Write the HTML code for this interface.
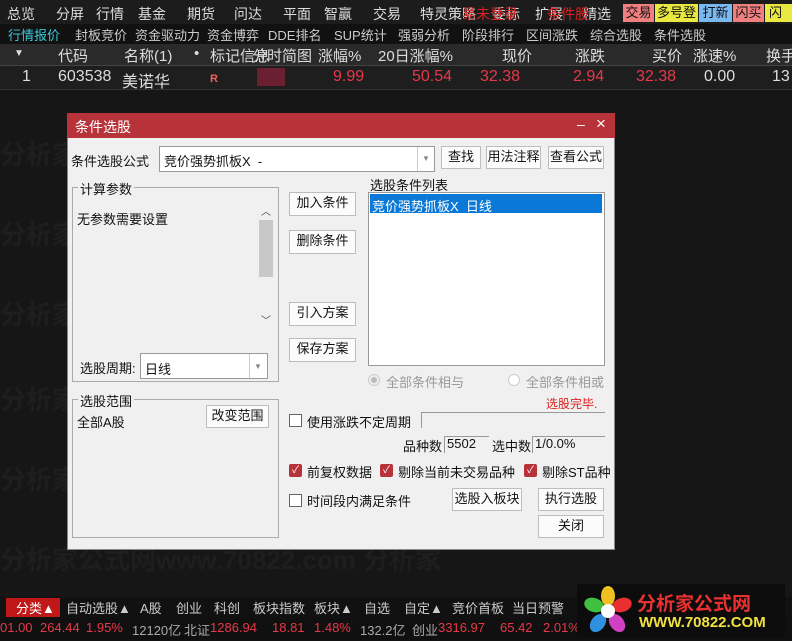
<!DOCTYPE html>
<html><head><meta charset="utf-8">
<style>
*{margin:0;padding:0;box-sizing:border-box}
body{width:792px;height:641px;background:#161616;position:relative;overflow:hidden;font-family:"Liberation Sans","Noto Sans CJK SC",sans-serif;font-size:13px;color:#ccc}
.a{position:absolute;white-space:nowrap}
.wm{color:#1e1e1e;font-size:26px;font-weight:bold}
.btn{position:absolute;background:#fbfbfb;border:1px solid #bdbdbd;color:#111;font-size:13px;text-align:center;line-height:20px}
.cb{position:absolute;width:13px;height:13px;border:1px solid #666;background:#fff}
.cbr{position:absolute;width:13px;height:13px;background:#b8323a;border-radius:2px;color:#fff;font-size:10px;line-height:13px;text-align:center}
.t{position:absolute;color:#111;font-size:13px;white-space:nowrap}
</style></head><body>
<div class="a" style="left:0;top:0;width:792px;height:24px;background:#1c1c1c"></div>
<div class="a" style="top:4px;left:7px;color:#ddd;font-size:14px">
<span style="position:absolute;left:0">总览</span><span style="position:absolute;left:49px">分屏</span><span style="position:absolute;left:89px">行情</span><span style="position:absolute;left:131px">基金</span><span style="position:absolute;left:180px">期货</span><span style="position:absolute;left:227px">问达</span><span style="position:absolute;left:276px">平面</span><span style="position:absolute;left:317px">智赢</span><span style="position:absolute;left:366px">交易</span><span style="position:absolute;left:413px">特灵策略</span><span style="position:absolute;left:485px">委标</span><span style="position:absolute;left:528px">扩展</span><span style="position:absolute;left:576px">精选</span>
<span style="position:absolute;left:455px;color:#e02020">易未登录</span><span style="position:absolute;left:540px;color:#e02020">条件股</span></div>
<div class="a" style="left:623px;top:4px;width:31px;height:18px;background:#f08080;color:#111;text-align:center;line-height:18px">交易</div>
<div class="a" style="left:655px;top:4px;width:43px;height:18px;background:#e8e840;color:#111;text-align:center;line-height:18px">多号登</div>
<div class="a" style="left:699px;top:4px;width:33px;height:18px;background:#7ab8f0;color:#111;text-align:center;line-height:18px">打新</div>
<div class="a" style="left:733px;top:4px;width:31px;height:18px;background:#f08080;color:#111;text-align:center;line-height:18px">闪买</div>
<div class="a" style="left:765px;top:4px;width:27px;height:18px;background:#e8e840;color:#111;text-align:left;padding-left:4px;line-height:18px">闪</div>
<div class="a" style="left:0;top:24px;width:792px;height:20px;background:#111"></div>
<div class="a" style="top:25px;left:0;font-size:13px;color:#ccc">
<span style="position:absolute;left:8px;color:#3ec8d8">行情报价</span><span style="position:absolute;left:75px">封板竞价</span><span style="position:absolute;left:135px">资金驱动力</span><span style="position:absolute;left:207px">资金博弈</span><span style="position:absolute;left:268px">DDE排名</span><span style="position:absolute;left:334px">SUP统计</span><span style="position:absolute;left:398px">强弱分析</span><span style="position:absolute;left:462px">阶段排行</span><span style="position:absolute;left:526px">区间涨跌</span><span style="position:absolute;left:590px">综合选股</span><span style="position:absolute;left:654px">条件选股</span></div>
<div class="a" style="left:0;top:44px;width:792px;height:22px;background:#2a2a2a;border-bottom:1px solid #444"></div>
<div class="a" style="top:45px;left:0;font-size:15px;color:#ddd">
<span style="position:absolute;left:14px;font-size:10px;top:3px">▼</span><span style="position:absolute;left:58px">代码</span><span style="position:absolute;left:124px">名称(1)</span><span style="position:absolute;left:194px">•</span><span style="position:absolute;left:210px">标记信息</span><span style="position:absolute;left:252px">分时简图</span><span style="position:absolute;left:318px">涨幅%</span><span style="position:absolute;left:378px">20日涨幅%</span><span style="position:absolute;left:502px">现价</span><span style="position:absolute;left:575px">涨跌</span><span style="position:absolute;left:652px">买价</span><span style="position:absolute;left:693px">涨速%</span><span style="position:absolute;left:766px">换手</span></div>
<div class="a" style="left:0;top:66px;width:792px;height:24px;background:#1e1e1e;border-bottom:1px solid #333"></div>
<div class="a" style="top:68px;left:0;font-size:16px;color:#ddd">
<span style="position:absolute;left:22px">1</span><span style="position:absolute;left:58px">603538</span><span style="position:absolute;left:122px">美诺华</span>
<span style="position:absolute;left:210px;top:5px;font-size:11px;color:#f06060;font-weight:bold">R</span>
<span style="position:absolute;left:333px;color:#e83848">9.99</span><span style="position:absolute;left:412px;color:#e83848">50.54</span><span style="position:absolute;left:480px;color:#e83848">32.38</span><span style="position:absolute;left:573px;color:#e83848">2.94</span><span style="position:absolute;left:636px;color:#e83848">32.38</span><span style="position:absolute;left:704px">0.00</span><span style="position:absolute;left:772px">13</span></div>
<div class="a" style="left:257px;top:68px;width:28px;height:18px;background:#6a2030"></div>
<div class="a wm" style="left:0;top:135px">分析家公式网www.70822.com 分析家</div>
<div class="a wm" style="left:0;top:215px">分析家公式网www.70822.com 分析家</div>
<div class="a wm" style="left:0;top:295px">分析家公式网www.70822.com 分析家</div>
<div class="a wm" style="left:0;top:380px">分析家公式网www.70822.com 分析家</div>
<div class="a wm" style="left:0;top:460px">分析家公式网www.70822.com 分析家</div>
<div class="a wm" style="left:0;top:540px">分析家公式网www.70822.com 分析家</div>
<div class="a" style="left:67px;top:113px;width:548px;height:437px;background:#f0f0f0;border:1px solid #888"></div>
<div class="a" style="left:67px;top:113px;width:548px;height:25px;background:#b8323a"></div>
<div class="a" style="left:75px;top:117px;color:#fff;font-size:14px">条件选股</div>
<div class="a" style="left:577px;top:116px;color:#fff;font-size:14px">–</div>
<div class="a" style="left:596px;top:114px;color:#fff;font-size:17px">×</div>
<div class="t" style="left:71px;top:151px">条件选股公式</div>
<div class="a" style="left:159px;top:146px;width:276px;height:26px;background:#fff;border:1px solid #999"></div>
<div class="t" style="left:164px;top:151px">竞价强势抓板X&nbsp; -</div>
<div class="a" style="left:417px;top:147px;width:1px;height:24px;background:#ccc"></div>
<div class="a" style="left:422px;top:154px;color:#888;font-size:8px">▼</div>
<div class="btn" style="left:441px;top:146px;width:40px;height:23px">查找</div>
<div class="btn" style="left:486px;top:146px;width:55px;height:23px">用法注释</div>
<div class="btn" style="left:548px;top:146px;width:56px;height:23px">查看公式</div>
<div class="a" style="left:72px;top:187px;height:195px;border:1px solid #aaa;width:207px"></div>
<div class="t" style="left:78px;top:179px;background:#f0f0f0;padding:0 2px">计算参数</div>
<div class="t" style="left:77px;top:209px">无参数需要设置</div>
<div class="a" style="left:258px;top:203px;width:16px;height:124px;background:#f0f0f0"></div>
<div class="a" style="left:259px;top:220px;width:14px;height:57px;background:#c8c8c8"></div>
<div class="a" style="left:261px;top:203px;color:#444;font-size:10px">︿</div>
<div class="a" style="left:261px;top:312px;color:#444;font-size:10px">﹀</div>
<div class="t" style="left:80px;top:358px">选股周期:</div>
<div class="a" style="left:140px;top:353px;width:128px;height:26px;background:#fff;border:1px solid #999"></div>
<div class="t" style="left:145px;top:359px">日线</div>
<div class="a" style="left:249px;top:354px;width:1px;height:24px;background:#ccc"></div>
<div class="a" style="left:254px;top:362px;color:#888;font-size:8px">▼</div>
<div class="a" style="left:72px;top:399px;width:207px;height:139px;border:1px solid #aaa"></div>
<div class="t" style="left:78px;top:391px;background:#f0f0f0;padding:0 2px">选股范围</div>
<div class="t" style="left:77px;top:412px">全部A股</div>
<div class="btn" style="left:206px;top:405px;width:63px;height:23px">改变范围</div>
<div class="btn" style="left:289px;top:192px;width:67px;height:24px">加入条件</div>
<div class="btn" style="left:289px;top:230px;width:67px;height:24px">删除条件</div>
<div class="btn" style="left:289px;top:302px;width:67px;height:24px">引入方案</div>
<div class="btn" style="left:289px;top:338px;width:67px;height:24px">保存方案</div>
<div class="t" style="left:370px;top:175px">选股条件列表</div>
<div class="a" style="left:368px;top:192px;width:237px;height:174px;background:#fff;border:1px solid #999"></div>
<div class="a" style="left:370px;top:194px;width:232px;height:19px;background:#0a78d7"></div>
<div class="a" style="left:372px;top:196px;color:#fff;font-size:13px">竞价强势抓板X&nbsp; 日线</div>
<div class="a" style="left:368px;top:374px;width:12px;height:12px;border-radius:50%;border:1px solid #ccc;background:#eee"></div>
<div class="a" style="left:371px;top:377px;width:6px;height:6px;border-radius:50%;background:#bbb"></div>
<div class="t" style="left:386px;top:372px;color:#999">全部条件相与</div>
<div class="a" style="left:508px;top:374px;width:12px;height:12px;border-radius:50%;border:1px solid #ccc;background:#fff"></div>
<div class="t" style="left:526px;top:372px;color:#999">全部条件相或</div>
<div class="t" style="left:546px;top:395px;color:#e02020;font-size:12px">选股完毕.</div>
<div class="cb" style="left:289px;top:414px"></div>
<div class="t" style="left:307px;top:412px">使用涨跌不定周期</div>
<div class="a" style="left:421px;top:412px;width:184px;height:16px;border-top:1px solid #999;border-left:1px solid #999"></div>
<div class="t" style="left:403px;top:436px">品种数</div>
<div class="a" style="left:444px;top:436px;width:45px;height:17px;border-top:1px solid #999;border-left:1px solid #999"></div>
<div class="t" style="left:447px;top:436px">5502</div>
<div class="t" style="left:492px;top:436px">选中数</div>
<div class="a" style="left:532px;top:436px;width:73px;height:17px;border-top:1px solid #999;border-left:1px solid #999"></div>
<div class="t" style="left:535px;top:436px">1/0.0%</div>
<div class="cbr" style="left:289px;top:464px">✓</div>
<div class="t" style="left:307px;top:462px">前复权数据</div>
<div class="cbr" style="left:380px;top:464px">✓</div>
<div class="t" style="left:398px;top:462px">剔除当前未交易品种</div>
<div class="cbr" style="left:524px;top:464px">✓</div>
<div class="t" style="left:542px;top:462px">剔除ST品种</div>
<div class="cb" style="left:289px;top:494px"></div>
<div class="t" style="left:307px;top:491px">时间段内满足条件</div>
<div class="btn" style="left:452px;top:488px;width:70px;height:23px">选股入板块</div>
<div class="btn" style="left:538px;top:488px;width:66px;height:23px">执行选股</div>
<div class="btn" style="left:538px;top:515px;width:66px;height:23px">关闭</div>
<div class="a" style="left:0;top:597px;width:792px;height:21px;background:#111"></div>
<div class="a" style="top:598px;left:0;font-size:13px;color:#ccc">
<span style="position:absolute;left:6px;top:0;width:54px;height:19px;background:#c01818"></span>
<span style="position:absolute;left:16px;color:#fff">分类▲</span><span style="position:absolute;left:66px">自动选股▲</span><span style="position:absolute;left:140px">A股</span><span style="position:absolute;left:176px">创业</span><span style="position:absolute;left:214px">科创</span><span style="position:absolute;left:253px">板块指数</span><span style="position:absolute;left:314px">板块▲</span><span style="position:absolute;left:364px">自选</span><span style="position:absolute;left:404px">自定▲</span><span style="position:absolute;left:452px">竞价首板</span><span style="position:absolute;left:512px">当日预警</span></div>
<div class="a" style="left:0;top:618px;width:792px;height:23px;background:#101010"></div>
<div class="a" style="top:620px;left:0;font-size:13px;color:#aaa">
<span style="position:absolute;left:0;color:#e83848">01.00</span><span style="position:absolute;left:40px;color:#e83848">264.44</span><span style="position:absolute;left:86px;color:#e83848">1.95%</span><span style="position:absolute;left:132px">12120亿</span><span style="position:absolute;left:184px">北证</span><span style="position:absolute;left:210px;color:#e83848">1286.94</span><span style="position:absolute;left:272px;color:#e83848">18.81</span><span style="position:absolute;left:314px;color:#e83848">1.48%</span><span style="position:absolute;left:360px">132.2亿</span><span style="position:absolute;left:412px">创业</span><span style="position:absolute;left:438px;color:#e83848">3316.97</span><span style="position:absolute;left:500px;color:#e83848">65.42</span><span style="position:absolute;left:543px;color:#e83848">2.01%</span></div>
<div class="a" style="left:577px;top:584px;width:208px;height:53px;background:#0c0c0c"></div>
<svg class="a" style="left:582px;top:585px" width="52" height="52" viewBox="0 0 52 52">
<ellipse cx="26" cy="11" rx="7" ry="10" fill="#f0c020"/>
<ellipse cx="40" cy="20" rx="7" ry="10" fill="#e83030" transform="rotate(72 40 20)"/>
<ellipse cx="35" cy="38" rx="7" ry="10" fill="#d040c0" transform="rotate(144 35 38)"/>
<ellipse cx="16" cy="38" rx="7" ry="10" fill="#3090e0" transform="rotate(216 16 38)"/>
<ellipse cx="12" cy="20" rx="7" ry="10" fill="#40c040" transform="rotate(288 12 20)"/>
<circle cx="26" cy="26" r="7" fill="#fff"/>
</svg>
<div class="a" style="left:637px;top:589px;color:#e83030;font-size:19px;font-weight:bold">分析家公式网</div>
<div class="a" style="left:639px;top:614px;color:#f0e040;font-size:15px;font-weight:bold">WWW.70822.COM</div>
</body></html>
